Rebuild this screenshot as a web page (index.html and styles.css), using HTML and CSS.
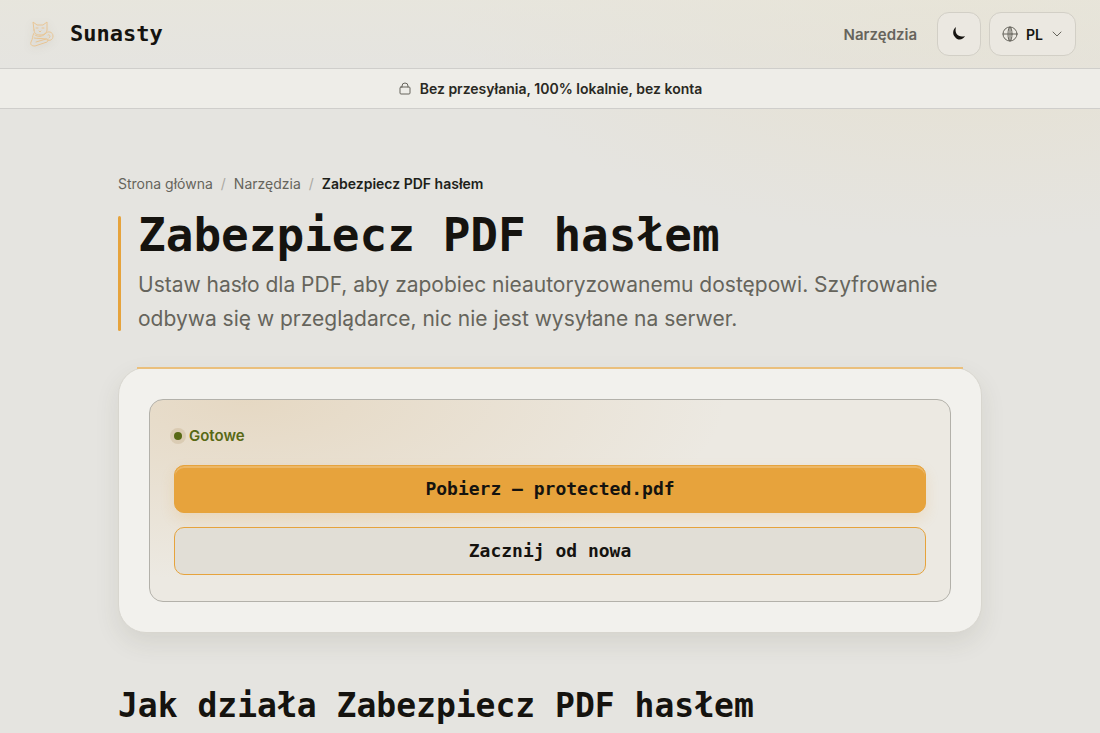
FILE: index.html
```html
<!DOCTYPE html>
<html lang="pl">
<head>
  <meta charset="UTF-8" />
  <meta name="viewport" content="width=device-width, initial-scale=1.0"/>
  <title>Zabezpiecz PDF hasłem – Sunasty</title>
  <link rel="stylesheet" href="styles.css">
</head>
<body>

  <header class="site-header">
    <a class="brand" href="#">
      <svg class="brand-logo" viewBox="0 0 34 34" aria-hidden="true">
        <path d="M10 13 9 5l4 3h6l4-3v8c0 3-3 5-7 5s-6-2-6-5Z"/>
        <path d="M12 11h2M18 11h2M15 14l1 1 1-1"/>
        <path d="M10 16c-2 3-1 6-3 9-1 3 1 4 4 4l12-4c2-1 1-4-1-3l-10 3"/>
        <path d="M21 17c3-4 8-2 8 2 0 4-3 5-6 4M24 18c2-1 3 2 1 3M11 18c3 2 7 2 10-1M10 21c4 1 8 0 12 1"/>
      </svg>
      <span>Sunasty</span>
    </a>
    <nav class="site-nav">
      <a class="nav-link" href="#">Narzędzia</a>
      <button class="icon-btn" type="button" aria-label="Tryb ciemny">
        <svg class="moon" viewBox="0 0 16 16" aria-hidden="true">
          <path d="M5 1C2 3 1 8 4 11c3 4 8 3 10-1C8 12 3 8 5 1Z"/>
        </svg>
      </button>
      <button class="lang-btn" type="button" aria-label="Język">
        <svg class="globe" viewBox="0 0 16 16" aria-hidden="true">
          <circle cx="8" cy="8" r="7"/>
          <ellipse cx="8" cy="8" rx="2" ry="7"/>
          <path d="M1 8h14M8 1v14"/>
        </svg>
        <span>PL</span>
        <svg class="chevron" viewBox="0 0 12 12" aria-hidden="true"><path d="m2 4 4 4 4-4"/></svg>
      </button>
    </nav>
  </header>

  <div class="notice">
    <svg class="lock" viewBox="0 0 14 14" aria-hidden="true">
      <rect x="2" y="6" width="10" height="7" rx="1"/>
      <path d="M4 6V5a3 3 0 0 1 6 0v1"/>
    </svg>
    <span>Bez przesyłania, 100% lokalnie, bez konta</span>
  </div>

  <main class="page">
    <nav class="breadcrumbs" aria-label="Okruszki">
      <a href="#">Strona główna</a>
      <span class="sep">/</span>
      <a href="#">Narzędzia</a>
      <span class="sep">/</span>
      <strong>Zabezpiecz PDF hasłem</strong>
    </nav>

    <div class="intro">
      <h1>Zabezpiecz PDF hasłem</h1>
      <p>Ustaw hasło dla PDF, aby zapobiec nieautoryzowanemu dostępowi. Szyfrowanie odbywa się w przeglądarce, nic nie jest wysyłane na serwer.</p>
    </div>

    <section class="tool">
      <div class="result">
        <p class="status">Gotowe</p>
        <button class="btn btn-primary" type="button">Pobierz — protected.pdf</button>
        <button class="btn btn-secondary" type="button">Zacznij od nowa</button>
      </div>
    </section>

    <h2>Jak działa Zabezpiecz PDF hasłem</h2>
  </main>

</body>
</html>
```
FILE: styles.css
```css
* {
  box-sizing: border-box;
}

body {
  margin: 0;
  min-height: 100vh;
  font-family: Inter, sans-serif;
  color: #15130f;
  background:
    radial-gradient(ellipse 520px 240px at 88% 0, rgba(232, 216, 170, 0.3), transparent),
    #e5e4e0;
  overflow-x: hidden;
}

a {
  color: inherit;
  text-decoration: none;
}

button {
  font-family: inherit;
  color: inherit;
  cursor: pointer;
}

svg {
  fill: none;
  stroke: currentColor;
  stroke-linecap: round;
  stroke-linejoin: round;
}

/* Header */
.site-header {
  display: flex;
  justify-content: space-between;
  align-items: center;
  height: 69px;
  padding: 0 24px;
  border-bottom: 1px solid #cfcecb;
  background: linear-gradient(rgba(232, 230, 220, 0.7), rgba(229, 228, 224, 0.4));
}

.brand {
  display: flex;
  align-items: center;
  gap: 12px;
  font: bold 22px/32px "DejaVu Sans Mono", monospace;
}

.brand-logo {
  width: 34px;
  height: 34px;
  stroke: #e8c594;
  filter: drop-shadow(0 2px 4px rgba(60, 50, 30, 0.15));
}

.site-nav {
  display: flex;
  align-items: center;
  gap: 8px;
}

.nav-link {
  margin-right: 12px;
  font-size: 15px;
  font-weight: 600;
  color: #66645c;
}

.icon-btn,
.lang-btn {
  display: flex;
  align-items: center;
  justify-content: center;
  height: 44px;
  border: 1px solid #d2cfc6;
  border-radius: 12px;
  background: #ebe8e1;
}

.icon-btn {
  width: 44px;
  padding: 0;
}

.moon {
  width: 16px;
  height: 16px;
  fill: #15130f;
  stroke: none;
}

.lang-btn {
  gap: 8px;
  padding: 0 12px;
  font-size: 14px;
  font-weight: 600;
}

.globe {
  width: 16px;
  height: 16px;
  color: #66645c;
}

.chevron {
  width: 12px;
  height: 12px;
  color: #66645c;
}

.notice {
  display: flex;
  align-items: center;
  justify-content: center;
  gap: 8px;
  height: 40px;
  padding-bottom: 1px;
  border-bottom: 1px solid #cfcecb;
  background: #eeede8;
  font-size: 14px;
  font-weight: 600;
  color: #292822;
}

.lock {
  width: 14px;
  height: 14px;
  color: #66645c;
}

/* Page */
.page {
  max-width: 912px;
  margin: 0 auto;
  padding: 64px 24px 0;
}

.breadcrumbs {
  display: flex;
  gap: 8px;
  font-size: 14px;
  line-height: 22px;
  color: #66645c;
}

.breadcrumbs .sep {
  color: #aaa8a2;
}

.breadcrumbs strong {
  font-weight: 600;
  color: #201f1a;
}

.intro {
  position: relative;
  margin-top: 20px;
  padding-left: 20px;
}

.intro::before {
  content: "";
  position: absolute;
  left: 0;
  top: 1px;
  bottom: 5px;
  width: 3px;
  border-radius: 2px;
  background: #e6a33c;
}

h1,
h2 {
  margin: 0;
  font-family: "DejaVu Sans Mono", monospace;
  font-weight: bold;
}

h1 {
  font-size: 46px;
  line-height: 40px;
}

.intro p {
  margin: 13px 0 0;
  font-size: 21px;
  line-height: 34px;
  color: #66645c;
}

.tool {
  position: relative;
  margin-top: 31px;
  padding: 31px 30px 30px;
  border: 1px solid #d8d6cf;
  border-radius: 28px;
  background: #f2f1ed;
  box-shadow: 0 10px 24px rgba(70, 65, 40, 0.1);
}

/* Amber line along the top edge */
.tool::before {
  content: "";
  position: absolute;
  left: 18px;
  right: 18px;
  top: -1px;
  height: 2px;
  background: #eabf7c;
}

.result {
  display: flex;
  flex-direction: column;
  gap: 14px;
  padding: 24px 24px 26px;
  border: 1px solid #b3b1aa;
  border-radius: 14px;
  background:
    radial-gradient(ellipse 60% 90% at 12% 0, rgba(216, 181, 130, 0.32), transparent),
    #ece9e2;
}

.status {
  display: flex;
  align-items: center;
  gap: 7px;
  margin: 0 0 3px;
  font-size: 15px;
  font-weight: 600;
  line-height: 24px;
  color: #586915;
}

.status::before {
  content: "";
  width: 8px;
  height: 8px;
  border-radius: 50%;
  background: #586915;
  box-shadow: 0 0 0 4px rgba(160, 130, 70, 0.18);
}

.btn {
  height: 48px;
  border: 1px solid #e6a33c;
  border-radius: 10px;
  font: bold 18px/24px "DejaVu Sans Mono", monospace;
}

.btn-primary {
  background: #e7a33c;
  box-shadow: inset 0 2px 0 rgba(255, 255, 255, 0.22), 0 6px 14px rgba(231, 163, 60, 0.18);
}

.btn-secondary {
  background: #e1ded6;
}

h2 {
  margin-top: 52px;
  font-size: 33px;
  line-height: 42px;
}
```
